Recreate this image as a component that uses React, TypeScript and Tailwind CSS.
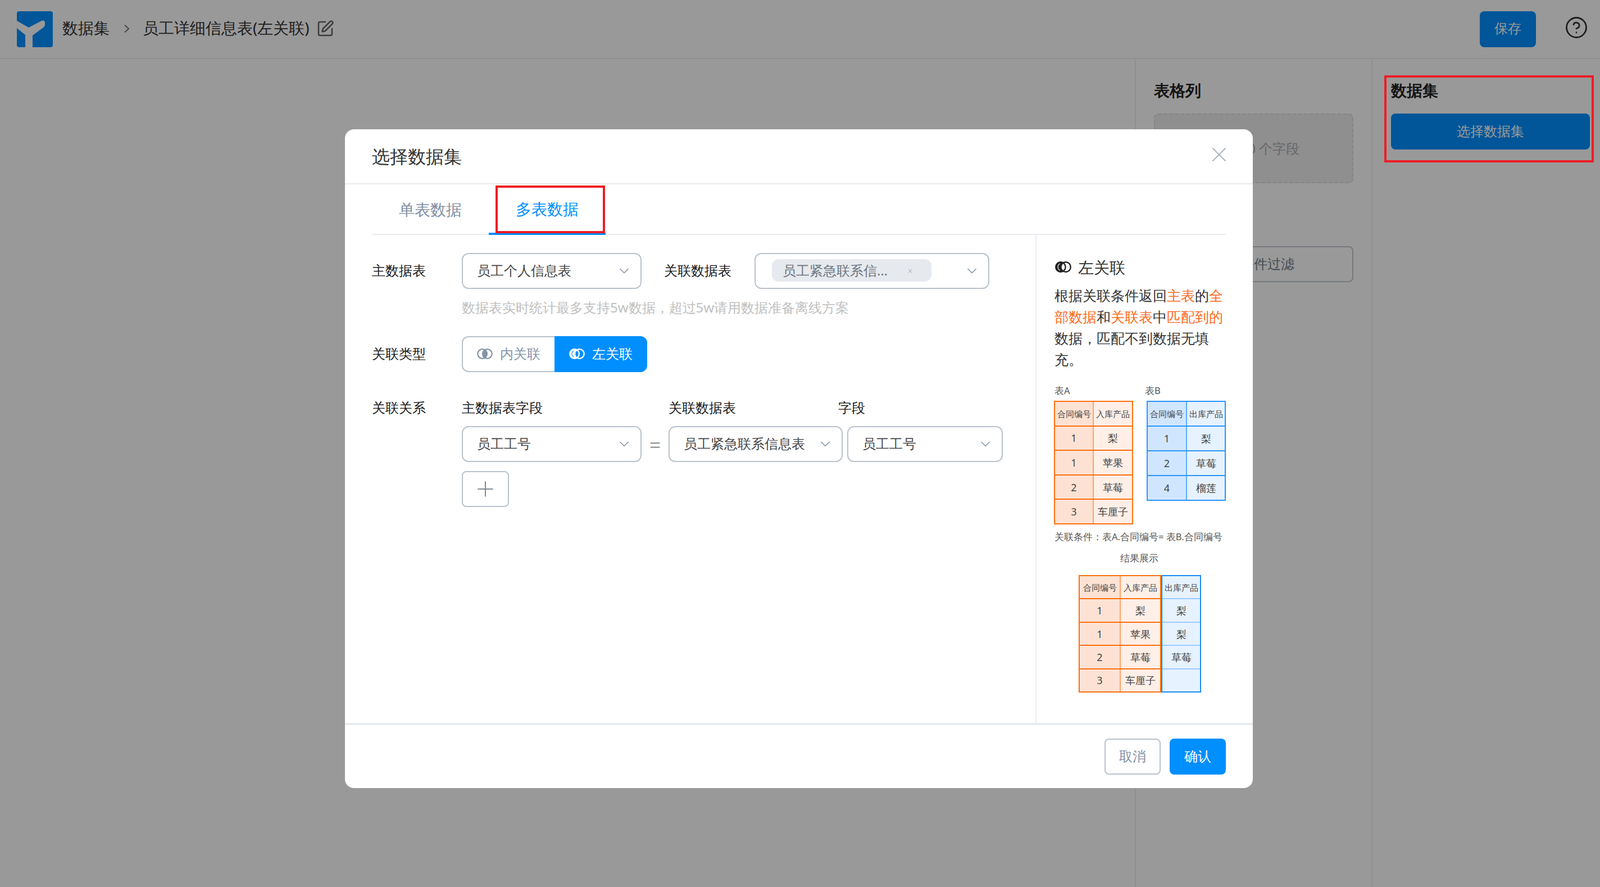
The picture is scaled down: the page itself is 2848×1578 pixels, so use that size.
import { ChevronDown, CircleHelp, Plus, SquarePen, X } from 'lucide-react'
import { clsx } from 'clsx'

const tones = {
  orange: {
    frame: 'border-[#ff6f0f]',
    line: 'border-t-2 border-[#ff6f0f]',
    first: 'bg-[#fde2d3] border-r-2 border-[#ffa26a]',
    rest: 'bg-[#ffefe7]',
  },
  blue: {
    frame: 'border-[#2a95ff]',
    line: 'border-t-2 border-[#2a95ff]',
    first: 'bg-[#d0e6ff] border-r-2 border-[#5cadff]',
    rest: 'bg-[#e6f2ff]',
  },
  pale: {
    frame: 'border-[#1a8cf0]',
    line: 'border-t-2 border-[#9ccbff]',
    first: 'bg-[#e6f2ff]',
    rest: 'bg-[#e6f2ff]',
  },
}

function MiniTable({ rows, tone, firstCol, className, head }: { rows: string[][]; tone: keyof typeof tones; firstCol: string; className: string; head: string }) {
  const t = tones[tone]
  return (
    <div className={clsx('flex flex-col border-2 text-[#444]', t.frame, className)}>
      {rows.map((row, i) => (
        <div key={i} className={clsx('flex min-h-0 flex-1', i > 0 && t.line)}>
          {row.map((cell, j) => (
            <div
              key={j}
              className={clsx(
                'flex items-center justify-center whitespace-nowrap',
                i === 0 ? clsx(head, 'font-medium') : 'text-[18px]',
                j === 0 ? clsx(firstCol, t.first) : clsx('flex-1', t.rest)
              )}
            >
              {cell}
            </div>
          ))}
        </div>
      ))}
    </div>
  )
}

function JoinIcon({ type, color, gap, className }: { type: 'inner' | 'left'; color: string; gap: string; className: string }) {
  return (
    <svg viewBox="0 0 32 24" fill="none" stroke={color} strokeWidth="2.6" className={className}>
      <circle cx="11" cy="12" r="9.5" />
      <circle cx="21" cy="12" r="9.5" />
      {type === 'inner' ? (
        <path d="M16 3.34A10 10 0 0 1 16 20.66A10 10 0 0 1 16 3.34Z" fill={color} stroke="none" />
      ) : (
        <>
          <path d="M16 3.34A10 10 0 1 0 16 20.66A10 10 0 0 1 16 3.34Z" fill={color} stroke="none" />
          <path d="M9.5 5.5A7.5 7.5 0 0 0 9.5 18.5" stroke={gap} strokeWidth="1.3" />
        </>
      )}
    </svg>
  )
}

function Select({ width, children }: { width: string; children: React.ReactNode }) {
  return (
    <div className={clsx('flex h-16 shrink-0 items-center justify-between rounded-xl border-2 border-[#b8c2cc] pl-[25px] pr-[15px] text-[#444]', width)}>
      <div className="flex min-w-0 items-center pb-[2px]">{children}</div>
      <ChevronDown size={28} strokeWidth={1.5} className="shrink-0 text-[#8a98a8]" />
    </div>
  )
}

function Label({ children }: { children: React.ReactNode }) {
  return <div className="w-[160px] shrink-0 pb-[2px] text-[#1a1a1a]">{children}</div>
}

const orange = 'text-[#ff6a1a]'

export default function App() {
  return (
    <div className="relative flex h-[1578px] w-[2848px] flex-col overflow-hidden bg-white font-['Noto_Sans_CJK_SC',sans-serif] text-[24px] leading-[32px]">
      {/* page behind the dialog */}
      <header className="flex h-[105px] shrink-0 items-center border-b-2 border-[#eeeeee] pl-[30px] pr-[21px]">
        <svg viewBox="0 0 64 64" className="h-16 w-16 shrink-0">
          <rect width="64" height="64" rx="4" fill="#008fff" />
          <path d="M0 17L21 29L44 17Q49 15 50 20V24Q50 27 47 29L28 43V64H15V42L0 30Z" fill="#fff" />
        </svg>
        <span className="mb-[5px] ml-[17px] text-[28px] text-[#333]">数据集</span>
        <svg viewBox="0 0 12 16" fill="none" stroke="#777" strokeWidth="2" className="mb-[2px] ml-[25px] h-4 w-3">
          <path d="M2 1.5L9 8L2 14.5" />
        </svg>
        <span className="mb-[5px] ml-[22px] text-[27.7px] text-[#333]">员工详细信息表(左关联)</span>
        <SquarePen size={32} strokeWidth={1.9} className="mb-[2px] ml-[12px] text-[#666]" />
        <button className="ml-auto flex h-16 w-[100px] items-center justify-center rounded-lg bg-[#008fff] pb-[3px] text-white">保存</button>
        <CircleHelp size={42} strokeWidth={1.6} className="mb-[6px] ml-[51px] text-[#333]" />
      </header>
      <div className="flex flex-1">
        <div className="flex-1" />
        <aside className="w-[423px] border-x-2 border-[#eeeeee] px-[32px] pt-[37px]">
          <h2 className="mb-[24px] text-[28px] leading-[36px] font-bold text-[#222]">表格列</h2>
          <div className="flex h-[124px] items-center justify-center rounded-lg border-2 border-dashed border-[#dddddd] bg-[#eeeeee] text-[#aaa]">已选择0 个字段</div>
          <button className="mt-[112px] flex h-16 w-full items-center justify-center rounded-lg border-2 border-[#c2cad3] pb-[2px] text-[#6f7d8c]">添加条件过滤</button>
        </aside>
        <aside className="w-[405px] pl-[33px] pr-[18px] pt-[37px]">
          <h2 className="mb-[24px] text-[28px] leading-[36px] font-bold text-[#222]">数据集</h2>
          <button className="flex h-16 w-full items-center justify-center rounded-lg bg-[#008fff] pb-[2px] text-white">选择数据集</button>
        </aside>
      </div>

      {/* modal layer */}
      <div className="absolute inset-0 flex justify-center bg-black/40 pr-[4px] pt-[230px]">
        <div className="flex h-[1172px] w-[1616px] flex-col rounded-2xl bg-white">
          <div className="flex h-[98px] shrink-0 items-center justify-between border-b-2 border-[#e8ebef] pl-[48px] pr-[38px] pb-[1px]">
            <span className="text-[32px] text-[#333]">选择数据集</span>
            <X size={44} strokeWidth={1.05} className="mb-[5px] text-[#a9b4c0]" />
          </div>

          <div className="mx-[48px] flex h-[90px] shrink-0 border-b-2 border-[#e8ebef] text-[28px]">
            <div className="flex w-[208px] items-center justify-center text-[#7f8fa4]">单表数据</div>
            <div className="relative -mb-[2px] flex w-[208px] items-center justify-center border-b-4 border-[#008fff] text-[#008fff]">
              多表数据
              <div className="absolute bottom-[-1px] left-[12px] right-[1px] top-[2px] border-4 border-[#ee1c25]" />
            </div>
          </div>

          <div className="flex h-[868px] shrink-0">
            <div className="w-[1231px] shrink-0 border-r-2 border-[#eceef1] pl-[48px] pt-[32px]">
              <div className="flex items-center">
                <Label>主数据表</Label>
                <Select width="w-[320px]">员工个人信息表</Select>
                <div className="ml-[40px] w-[161px] shrink-0 pb-[2px] text-[#1a1a1a]">关联数据表</div>
                <Select width="w-[418px]">
                  <div className="ml-[4px] flex h-10 w-[284px] items-center rounded-xl bg-[#e6e9ed] pl-[19px] text-[#6b7580]">
                    <span>员工紧急联系信…</span>
                    <X size={12} strokeWidth={1.6} className="ml-[34px] mt-[2px] text-[#8a96a3]" />
                  </div>
                </Select>
              </div>
              <div className="ml-[160px] mt-[17px] text-[#c0c0c0]">数据表实时统计最多支持5w数据，超过5w请用数据准备离线方案</div>

              <div className="mt-[35px] flex items-center">
                <Label>关联类型</Label>
                <div className="flex h-16 w-[165px] items-center justify-center gap-[13px] rounded-l-xl border-2 border-r-0 border-[#b8c2cc] pb-[2px] text-[#8494a8]">
                  <JoinIcon type="inner" color="#8494a8" gap="#fff" className="h-[21px] w-[28px]" />
                  内关联
                </div>
                <div className="flex h-16 w-[165px] items-center justify-center gap-[13px] rounded-r-xl bg-[#008fff] pb-[2px] text-white">
                  <JoinIcon type="left" color="#fff" gap="#008fff" className="h-[21px] w-[28px]" />
                  左关联
                </div>
              </div>

              <div className="mt-[47px] flex">
                <Label>关联关系</Label>
                <div>
                  <div className="flex text-[#1a1a1a]">
                    <div className="w-[368px]">主数据表字段</div>
                    <div className="w-[302px]">关联数据表</div>
                    <div>字段</div>
                  </div>
                  <div className="mt-[17px] flex items-center">
                    <Select width="w-[320px]">员工工号</Select>
                    <div className="flex w-[48px] justify-center pt-[4px] text-[36px] leading-[40px] text-[#999]">=</div>
                    <Select width="w-[310px]">
                      <span className="whitespace-nowrap">员工紧急联系信息表</span>
                    </Select>
                    <div className="w-[8px]" />
                    <Select width="w-[277px]">员工工号</Select>
                  </div>
                  <div className="mt-[16px] flex h-16 w-[84px] items-center justify-center rounded-lg border-2 border-[#b8c2cc] text-[#808a94]">
                    <Plus size={44} strokeWidth={1.1} />
                  </div>
                </div>
              </div>
            </div>

            <div className="min-w-0 flex-1 pl-[31px] pt-[38px]">
              <div className="flex h-[38px] items-center pl-px text-[28px] leading-[38px] text-[#333]">
                <JoinIcon type="left" color="#222" gap="#fff" className="h-[22px] w-[31px]" />
                <span className="ml-[11px]">左关联</span>
              </div>
              <div className="mt-[12px] w-[306px] pl-px text-[25px] leading-[38px] text-[#333]">
                <div>根据关联条件返回<span className={orange}>主表</span>的<span className={orange}>全</span></div>
                <div><span className={orange}>部数据</span>和<span className={orange}>关联表</span>中<span className={orange}>匹配到的</span></div>
                <div>数据，匹配不到数据无填</div>
                <div>充。</div>
              </div>
              <div className="mt-[27px] flex h-5 pl-px text-[16.5px] leading-5 text-[#555]">
                <div className="w-[161px]">表A</div>
                <div>表B</div>
              </div>
              <div className="mt-[8px] flex items-start gap-[24px]">
                <MiniTable
                  tone="orange"
                  head="text-[15px]"
                  firstCol="w-[69px]"
                  className="h-[220px] w-[141px]"
                  rows={[['合同编号', '入库产品'], ['1', '梨'], ['1', '苹果'], ['2', '草莓'], ['3', '车厘子']]}
                />
                <MiniTable
                  tone="blue"
                  head="text-[15px]"
                  firstCol="w-[70px]"
                  className="h-[178px] w-[141px]"
                  rows={[['合同编号', '出库产品'], ['1', '梨'], ['2', '草莓'], ['4', '榴莲']]}
                />
              </div>
              <div className="mt-[10px] whitespace-nowrap pl-px text-[16.5px] leading-6 text-[#555]">关联条件：表A.合同编号= 表B.合同编号</div>
              <div className="ml-[118px] mt-[14px] text-[16.5px] leading-6 text-[#555]">结果展示</div>
              <div className="ml-[44px] mt-[18px] flex">
                <MiniTable
                  tone="orange"
                  head="text-[14.5px]"
                  firstCol="w-[73px]"
                  className="h-[209px] w-[147px]"
                  rows={[['合同编号', '入库产品'], ['1', '梨'], ['1', '苹果'], ['2', '草莓'], ['3', '车厘子']]}
                />
                <MiniTable
                  tone="pale"
                  head="text-[14.5px]"
                  firstCol="flex-1"
                  className="h-[209px] w-[71px]"
                  rows={[['出库产品'], ['梨'], ['梨'], ['草莓'], ['']]}
                />
              </div>
            </div>
          </div>

          <div className="flex flex-1 items-center justify-end gap-[16px] border-t-[4px] border-[#e8ebef] pr-[48px]">
            <button className="flex h-16 w-[100px] items-center justify-center rounded-lg border-2 border-[#b8c2cc] pb-[2px] text-[#7f8fa4]">取消</button>
            <button className="flex h-16 w-[100px] items-center justify-center rounded-lg bg-[#008fff] pb-[2px] text-white">确认</button>
          </div>
        </div>
      </div>

      {/* annotation above the dimmed page */}
      <div className="absolute left-[2464px] top-[134px] h-[155px] w-[373px] border-4 border-[#ee1c25]" />
    </div>
  )
}
